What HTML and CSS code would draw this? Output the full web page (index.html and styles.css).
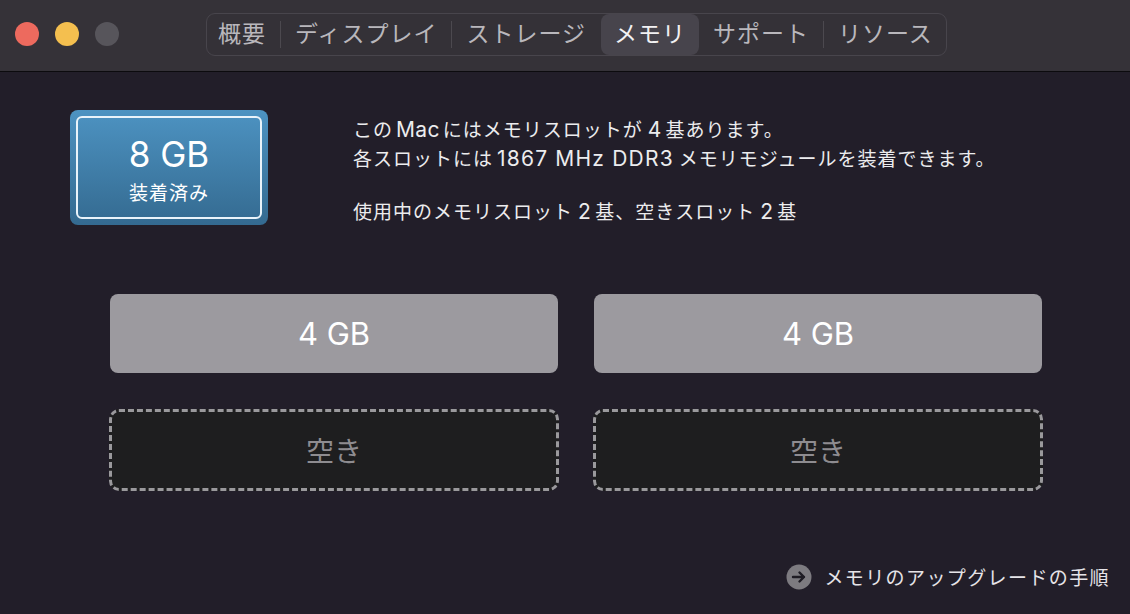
FILE: index.html
```html
<!DOCTYPE html>
<html lang="ja">
<head>
<meta charset="utf-8">
<link rel="stylesheet" href="styles.css">
</head>
<body>
<div class="window">
  <header class="titlebar">
    <div class="lights">
      <span class="light red"></span>
      <span class="light yellow"></span>
      <span class="light gray"></span>
    </div>
    <nav class="tabs">
      <span class="tab">概要</span>
      <span class="sep"></span>
      <span class="tab">ディスプレイ</span>
      <span class="sep"></span>
      <span class="tab">ストレージ</span>
      <span class="tab selected">メモリ</span>
      <span class="tab">サポート</span>
      <span class="sep"></span>
      <span class="tab">リソース</span>
    </nav>
  </header>
  <main class="content">
    <section class="summary">
      <div class="installed">
        <div class="installed-inner">
          <div class="installed-size">8 GB</div>
          <div class="installed-label">装着済み</div>
        </div>
      </div>
      <div class="info">
        <p class="info-line">この<span class="latin">Mac</span>にはメモリスロットが<span class="latin num">4</span>基あります。</p>
        <p class="info-line">各スロットには<span class="latin lead">1867 MHz DDR3</span>メモリモジュールを装着できます。</p>
        <p class="info-line gapline">使用中のメモリスロット<span class="latin num">2</span>基、空きスロット<span class="latin num">2</span>基</p>
      </div>
    </section>
    <section class="slots">
      <div class="slot filled">4 GB</div>
      <div class="slot filled">4 GB</div>
      <div class="slot empty">空き</div>
      <div class="slot empty">空き</div>
    </section>
    <footer class="footer">
      <span class="arrow">
        <svg width="26" height="26" viewBox="0 0 26 26">
          <circle cx="13" cy="13" r="12.5" fill="#7d7b80"/>
          <path d="M7 13 H18 M13.5 8.5 L18 13 L13.5 17.5" stroke="#1f1c24" stroke-width="2.4" fill="none" stroke-linecap="round" stroke-linejoin="round"/>
        </svg>
      </span>
      <span class="link">メモリのアップグレードの手順</span>
    </footer>
  </main>
</div>
</body>
</html>
```

FILE: styles.css
```css
* { box-sizing: border-box; }
html, body {
  margin: 0;
  padding: 0;
  background: #221e29;
}
body {
  width: 1130px;
  height: 614px;
  overflow: hidden;
  font-family: "Noto Sans CJK JP", "Noto Sans", sans-serif;
  color: #e6e4e8;
}
.window {
  display: flex;
  flex-direction: column;
  height: 614px;
}
.titlebar {
  height: 72px;
  background: #353238;
  border-bottom: 1px solid #0c0b0e;
  display: flex;
  align-items: flex-start;
  padding-left: 15px;
  flex-shrink: 0;
}
.lights {
  display: flex;
  gap: 16px;
  margin-top: 22px;
}
.light {
  width: 24px;
  height: 24px;
  border-radius: 50%;
  display: block;
}
.red { background: #ed6a5e; }
.yellow { background: #f4bf4f; }
.gray { background: #57555b; }
.tabs {
  margin-left: 87px;
  margin-top: 13px;
  height: 43px;
  border: 1px solid #48454c;
  border-radius: 9px;
  display: flex;
  align-items: center;
  padding: 0 13px 0 11px;
  background: #343137;
}
.tab {
  font-size: 23px;
  letter-spacing: 1px;
  color: #b9b7bc;
  padding: 0 14px 4px;
  line-height: 37px;
}
.tab:first-child { padding-left: 0; }
.tab.selected {
  background: #47444c;
  color: #f2f1f3;
  border-radius: 8px;
  padding: 0 13px 4px 13px;
  margin: 0 0 0 1px;
}
.tab:last-child { padding-right: 0; }
.sep {
  width: 1px;
  height: 27px;
  background: #4c494f;
}
.content {
  flex: 1;
  display: flex;
  flex-direction: column;
  padding: 38px 0 0 0;
}
.summary {
  display: flex;
  padding-left: 70px;
}
.installed {
  width: 198px;
  height: 115px;
  border-radius: 8px;
  background: linear-gradient(#4d93c2, #346a90);
  padding: 6px;
}
.installed-inner {
  height: 100%;
  border: 2px solid #e9f3fa;
  border-radius: 6px;
  display: flex;
  flex-direction: column;
  align-items: center;
  justify-content: center;
  color: #ffffff;
  padding-top: 4px;
}
.installed-size {
  font-family: "Inter", "Liberation Sans", sans-serif;
  font-size: 35px;
  line-height: 40px;
}
.installed-label {
  font-size: 19px;
  letter-spacing: 1px;
  line-height: 26px;
  margin-top: 5px;
}
.info {
  margin-left: 85px;
  padding-top: 5px;
}
.info-line {
  margin: 0;
  font-size: 19px;
  letter-spacing: 1px;
  line-height: 28px;
  color: #ececee;
}
.latin {
  font-family: "Inter", "Noto Sans", sans-serif;
  font-size: 21px;
  margin: 0 3px;
  letter-spacing: 0.3px;
}
.num { margin: 0 4px 0 5px; }
.lead { margin: 0 5px 0 4px; letter-spacing: 1.2px; }
.gapline { margin-top: 24px; }
.slots {
  display: grid;
  grid-template-columns: 450px 450px;
  column-gap: 34px;
  row-gap: 36px;
  padding-left: 109px;
  margin-top: 68px;
}
.slot {
  border-radius: 8px;
  display: flex;
  align-items: center;
  justify-content: center;
}
.filled {
  background: #9c9a9f;
  color: #ffffff;
  font-family: "Inter", "Liberation Sans", sans-serif;
  font-size: 31px;
  margin: 0 1px 0 1px;
  height: 79px;
}
.empty {
  background: #1e1e1f;
  border: 3px dashed #9a999c;
  color: #8e8c90;
  font-size: 28px;
  height: 82px;
  border-radius: 10px;
}
.footer {
  margin-top: auto;
  display: flex;
  align-items: center;
  justify-content: flex-end;
  padding: 0 20px 24px 0;
  gap: 12px;
}
.arrow { display: flex; }
.link {
  font-size: 19px;
  letter-spacing: 1.4px;
  color: #e6e4e8;
}
```
